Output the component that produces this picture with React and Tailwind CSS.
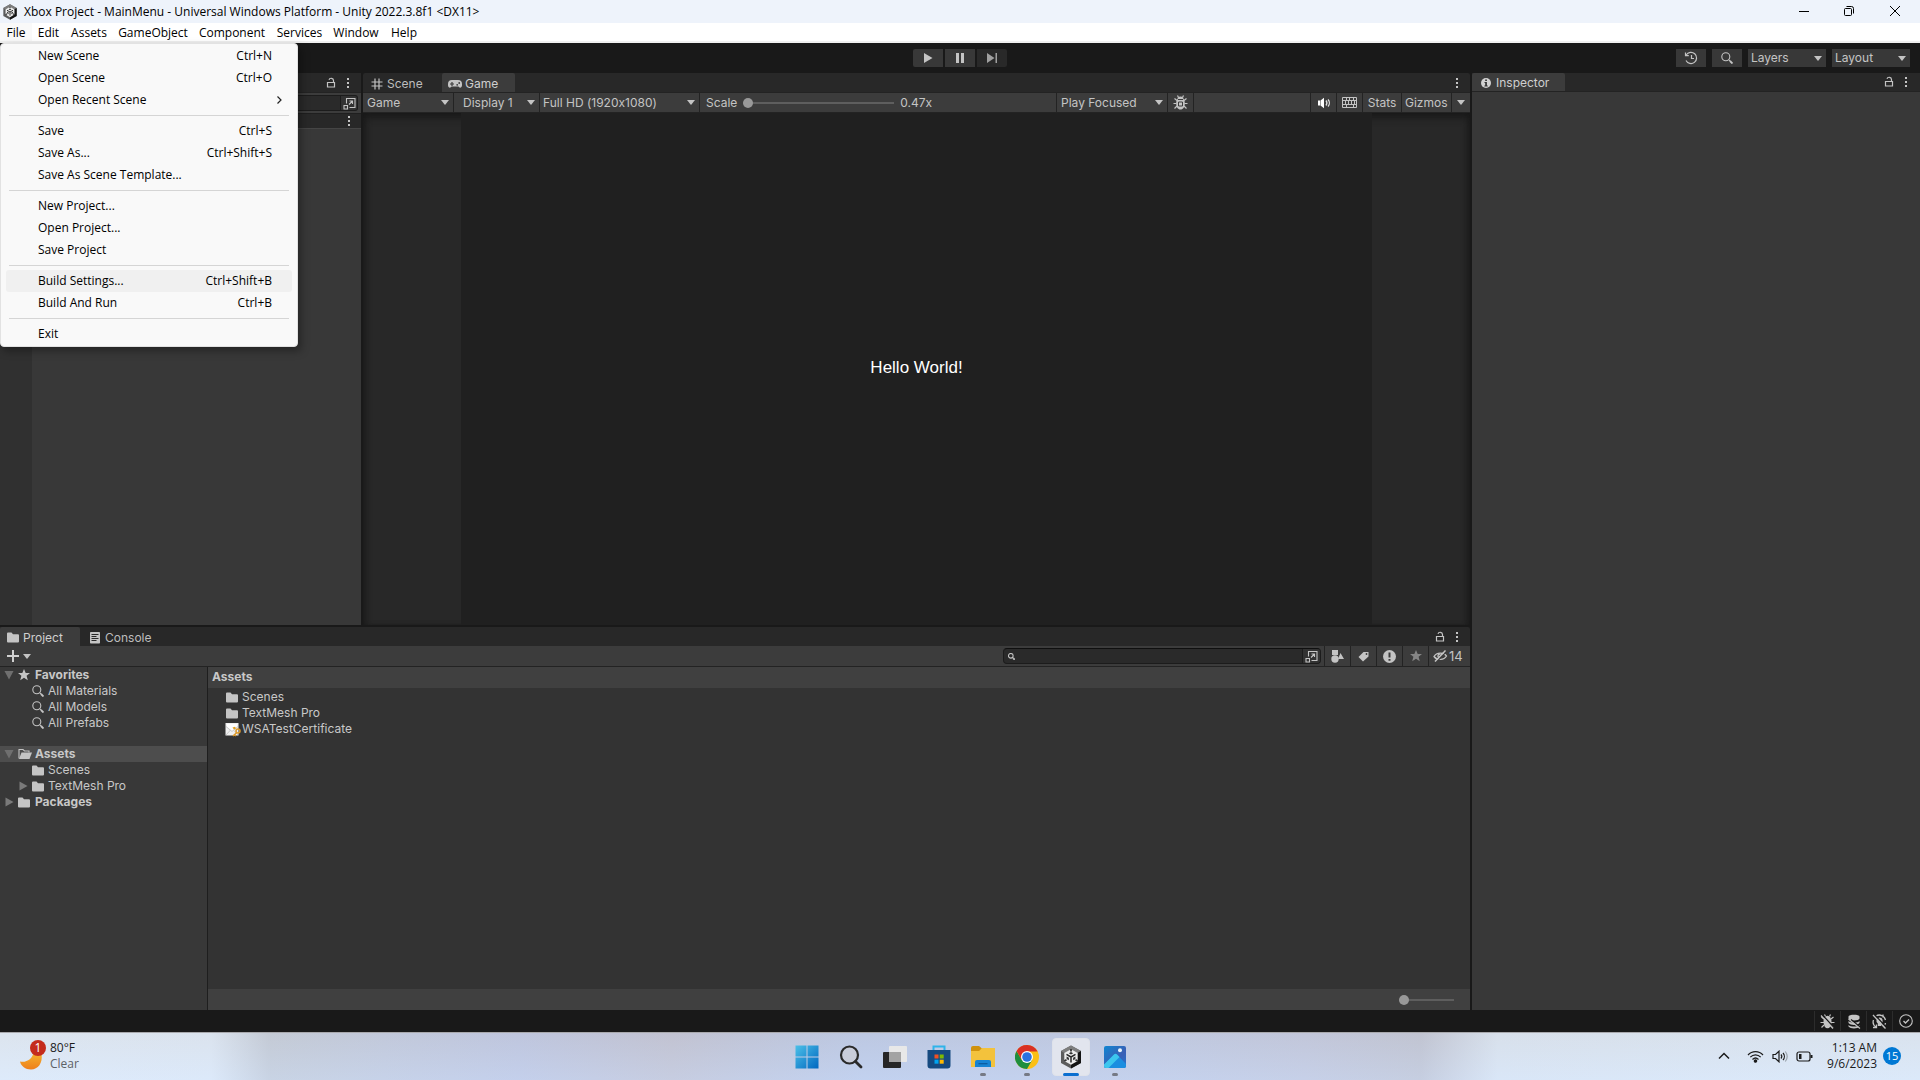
import React from "react";

const UI = "font-['Inter','Liberation_Sans',sans-serif] [font-variant-ligatures:no-contextual]";
const WIN = "font-['Open_Sans','Noto_Sans',sans-serif]";

/* ---------- icons ---------- */

function UnityLogo({ size, className }) {
  return (
    <svg width={size} height={size} viewBox="0 0 24 24" className={className}>
      <path d="M12 .5 22 6v12l-10 5.500L2 18V6z" fill="#5c5c5c" />
      <path d="M12 .5 22 6l-10 6L2 6z" fill="#7e7e7e" />
      <path d="M12 12 22 6v12l-10 5.500z" fill="#141414" />
      <path d="M12 4.300 18.700 8.100v7.800L12 19.700l-6.700-3.800V8.100z" fill="#ededed" />
      <path d="M12 12v5.500M12 12 7.500 9.400M12 12l4.500-2.600" stroke="#2a2a2a" strokeWidth="1.500" />
      <path d="M12 4v2.500M5.300 16l2.200-1.300M18.700 16l-2.200-1.300" stroke="#333" strokeWidth="1.800" />
      <path d="M9.800 8.300 12 7.100l2.200 1.200L12 9.500zM7.600 11.500l2.300 1.300v2.400l-2.300-1.300zM16.400 11.500l-2.300 1.300v2.400l2.300-1.300z" fill="#333" />
    </svg>
  );
}

function Caret({ className = "" }) {
  return (
    <svg width="8" height="5" viewBox="0 0 8 5" className={className}>
      <path d="M0 0h8L4 5z" fill="#c4c4c4" />
    </svg>
  );
}

function Dots() {
  return (
    <svg width="4" height="12" viewBox="0 0 4 12">
      <path d="M1 1h2v2H1zM1 5h2v2H1zM1 9h2v2H1z" fill="#c4c4c4" />
    </svg>
  );
}

function Lock() {
  return (
    <svg width="10" height="12" viewBox="0 0 10 12" fill="none" stroke="#c4c4c4">
      <path d="M1.500 5.500h7v4.500h-7z" strokeWidth="1.200" />
      <path d="M7.500 5.500V3.500a2.300 2.300 0 0 0-4.500-.6" strokeWidth="1.200" />
    </svg>
  );
}

function PopOut() {
  return (
    <svg width="13" height="13" viewBox="0 0 13 13" fill="none" stroke="#c4c4c4" strokeWidth="1.100">
      <path d="M3.500 6.500V1.500h8.500v9H6.500" />
      <path d="M1 8.500h3.500V12H1z" />
      <path d="M6 7.500 9.500 4M6.500 4h3v3" />
    </svg>
  );
}

function Grid() {
  return (
    <svg width="12" height="12" viewBox="0 0 12 12" stroke="#c4c4c4" strokeWidth="1.200">
      <path d="M4 0.500v11M8 0.500v11M0.500 4h11M0.500 8h11" />
    </svg>
  );
}

function Gamepad() {
  return (
    <svg width="14" height="10" viewBox="0 0 14 10">
      <path d="M4 1h6a4 4 0 0 1 4 4v1.200c0 2.600-2.500 3.300-3.600 1.300H3.600C2.500 9.500 0 8.800 0 6.200V5a4 4 0 0 1 4-4z" fill="#c4c4c4" />
      <path d="M4 3v4M2 5h4" stroke="#3c3c3c" strokeWidth="1.200" />
      <circle cx="9.200" cy="5.800" r="0.900" fill="#3c3c3c" />
      <circle cx="11.200" cy="4" r="0.900" fill="#3c3c3c" />
    </svg>
  );
}

function Folder() {
  return (
    <svg width="12" height="11" viewBox="0 0 12 11" className="shrink-0">
      <path d="M0 1.500A1 1 0 0 1 1 .5h3.500l1.500 1.700h5a1 1 0 0 1 1 1V9.500a1 1 0 0 1-1 1H1a1 1 0 0 1-1-1z" fill="#c4c4c4" />
    </svg>
  );
}

function FolderOpen() {
  return (
    <svg width="14" height="12" viewBox="0 0 14 12" className="shrink-0">
      <path d="M1 10.500V1.500h4L6.500 3H11v1.500" fill="none" stroke="#c4c4c4" strokeWidth="1.100" />
      <path d="M3.500 4.500H14L11.500 11H1z" fill="#c4c4c4" />
    </svg>
  );
}

function ConsoleIcon() {
  return (
    <svg width="10" height="12" viewBox="0 0 10 12">
      <rect width="10" height="11.500" rx="0.800" fill="#c4c4c4" />
      <path d="M1.500 2.500h7M1.500 4.500h5M1.500 6.500h7M1.500 8.500h5" stroke="#282828" />
    </svg>
  );
}

function Search({ size = 12, sw = 1.1 }) {
  return (
    <svg width={size} height={size} viewBox="0 0 12 12" fill="none" stroke="#c4c4c4" strokeWidth={sw} className="shrink-0">
      <circle cx="4.800" cy="4.800" r="4" />
      <path d="M8 8l1.200 1.200" />
      <path d="M9 9l2.500 2.500" strokeWidth={sw * 1.7} />
    </svg>
  );
}

function Star({ fill = "#c4c4c4" }) {
  return (
    <svg width="12" height="12" viewBox="0 0 12 12" className="shrink-0">
      <path d="M6 0l1.700 4H12L8.600 6.800 9.800 11.300 6 8.700 2.200 11.300l1.200-4.500L0 4h4.300z" fill={fill} />
    </svg>
  );
}

function Info() {
  return (
    <svg width="10" height="10" viewBox="0 0 10 10">
      <circle cx="5" cy="5" r="5" fill="#d2d2d2" />
      <path d="M4.200 1.500h1.700v1.500H4.200zM3.500 4h2.400v3.500h.8v1H3.400v-1h.8V5h-.7z" fill="#333" />
    </svg>
  );
}

function Bug() {
  return (
    <svg width="15" height="15" viewBox="0 0 15 15" fill="none" stroke="#c4c4c4">
      <path d="M4 5.500 1.500 3.500M11 5.500l2.500-2M3.500 8.500H.5M11.500 8.500h3M4 11l-2.500 2.500M11 11l2.500 2.500M5.500 2.500 4.500.5M9.500 2.500l1-2" strokeWidth="1.200" />
      <path d="M7.500 1.500c2.200 0 3 1.200 3 2.500 1 .8 1.300 2.500 1.300 4.500 0 3.500-1.600 6-4.300 6s-4.300-2.500-4.300-6c0-2 .3-3.700 1.300-4.500 0-1.300.8-2.500 3-2.500z" fill="#c4c4c4" stroke="none" />
      <path d="M5 4.500h5M5.500 7h4v4h-4z" stroke="#3c3c3c" />
    </svg>
  );
}

function Speaker() {
  return (
    <svg width="14" height="12" viewBox="0 0 14 12">
      <path d="M1 3.500h2v5H1zM3.500 3.500 7 .8v10.400L3.500 8.500z" fill="#fff" />
      <path d="M9 3.500c1 1.300 1 3.700 0 5M11 2.500c1.800 2 1.800 5 0 7" fill="none" stroke="#e0e0e0" strokeWidth="1.300" />
    </svg>
  );
}

function Keyboard() {
  return (
    <svg width="15" height="11" viewBox="0 0 15 11" fill="none" stroke="#c4c4c4">
      <path d="M.5.5h14v10H.5zM.5 3.500h14M.5 7.500h14M4.500.5v3M7.500.5v3M11.500.5v3M3.500 3.500v4M6.500 3.500v4M9.500 3.500v4M12.500 3.500v4M4.500 7.500v3M11.500 7.500v3" />
    </svg>
  );
}

function Triangle({ open }) {
  return (
    <svg width="10" height="10" viewBox="0 0 10 10" className="shrink-0">
      <path d={open ? "M0.500 1h9L5 9.500z" : "M1.500 0.500v9L9.500 5z"} fill={open ? "#6f6f6f" : "#7a7a7a"} />
    </svg>
  );
}

function Certificate() {
  return (
    <svg width="16" height="15" viewBox="0 0 16 15" className="-ml-px shrink-0">
      <rect x="0.500" y="1" width="13" height="12.500" fill="#f0f0f0" />
      <path d="M1 4.500 7 9.500l6-5M1 13l4.500-5M13 13 9 8.500" fill="none" stroke="#c9c9c9" />
      <path d="M2 2h10v2.500L7 8.500 2 4.500z" fill="#fff" />
      <path d="M7.500 5.500l2.500-.7 1 1.500L9 7.600z" fill="#e2a01c" />
      <circle cx="13" cy="9" r="2" fill="none" stroke="#dd9a2b" strokeWidth="1.500" />
      <path d="M11.800 10.500 8 14M9.500 12.500l1.500 1.500" stroke="#dd9a2b" strokeWidth="1.500" />
    </svg>
  );
}

/* ---------- shared controls ---------- */

function Dropdown({ label, name, className = "", padding = "pl-1" }) {
  return (
    <label className={`relative flex items-center ${className}`}>
      <select
        aria-label={name}
        className={`h-full w-full appearance-none bg-transparent pr-4 text-[12px] leading-4 text-[#c4c4c4] outline-none ${padding}`}
      >
        <option>{label}</option>
      </select>
      <Caret className="pointer-events-none absolute right-1" />
    </label>
  );
}

const SLIDER =
  "h-3 appearance-none bg-transparent [&::-webkit-slider-runnable-track]:h-[2px] [&::-webkit-slider-runnable-track]:bg-[#5e5e5e] [&::-webkit-slider-thumb]:-mt-1 [&::-webkit-slider-thumb]:size-[10px] [&::-webkit-slider-thumb]:appearance-none [&::-webkit-slider-thumb]:rounded-full [&::-webkit-slider-thumb]:bg-[#999999]";

function IconButton({ label, className = "", children }) {
  return (
    <button type="button" aria-label={label} className={`flex items-center justify-center ${className}`}>
      {children}
    </button>
  );
}

function TabStrip({ children, lock, className = "", end = "pr-[9px]" }) {
  return (
    <div className={`flex h-[19px] shrink-0 items-stretch bg-[#282828] ${className}`}>
      {children}
      <div className={`ml-auto flex items-center gap-[5px] ${end}`}>
        {lock && (
          <IconButton label="Lock" className="w-4">
            <Lock />
          </IconButton>
        )}
        <IconButton label="Panel menu" className="w-2">
          <Dots />
        </IconButton>
      </div>
    </div>
  );
}

function Tab({ active, icon, label, className = "" }) {
  return (
    <button
      type="button"
      className={`flex items-center pt-[2px] text-[12px] leading-4 ${
        active ? "rounded-t-[2px] bg-[#3c3c3c] text-[#cfcfcf]" : "text-[#bdbdbd]"
      } ${className}`}
    >
      {icon}
      <span>{label}</span>
    </button>
  );
}

/* ---------- window chrome ---------- */

function TitleBar() {
  return (
    <header className={`flex h-[23px] shrink-0 items-center bg-[#eef3fb] text-[12px] leading-4 text-black ${WIN}`}>
      <UnityLogo size={16} className="ml-[2px]" />
      <span className="ml-[6px]">Xbox Project - MainMenu - Universal Windows Platform - Unity 2022.3.8f1 &lt;DX11&gt;</span>
      <div className="ml-auto flex h-full items-center pr-[2px] pb-[2px]">
        <IconButton label="Minimize" className="h-full w-[45px]">
          <svg width="10" height="10" viewBox="0 0 10 10"><path d="M0 5.500h10" stroke="#000" /></svg>
        </IconButton>
        <IconButton label="Restore" className="h-full w-[45px]">
          <svg width="10" height="10" viewBox="0 0 10 10" fill="none" stroke="#000">
            <rect x="0.500" y="2.500" width="7" height="7" rx="1" />
            <path d="M2.500.5h5a2 2 0 0 1 2 2v5" />
          </svg>
        </IconButton>
        <IconButton label="Close" className="h-full w-[47px]">
          <svg width="10" height="10" viewBox="0 0 10 10"><path d="M0 0l10 10M10 0L0 10" stroke="#000" /></svg>
        </IconButton>
      </div>
    </header>
  );
}

const MENUS = [
  ["File", "w-8 bg-[#f9f9f9]"],
  ["Edit", "w-[33px]"],
  ["Assets", "w-12"],
  ["GameObject", "w-20"],
  ["Component", "w-[78px]"],
  ["Services", "w-[57px]"],
  ["Window", "w-14"],
  ["Help", "w-10"],
];

const FILE_MENU = [
  [["New Scene", "Ctrl+N"], ["Open Scene", "Ctrl+O"], ["Open Recent Scene", ">"]],
  [["Save", "Ctrl+S"], ["Save As...", "Ctrl+Shift+S"], ["Save As Scene Template...", ""]],
  [["New Project...", ""], ["Open Project...", ""], ["Save Project", ""]],
  [["Build Settings...", "Ctrl+Shift+B"], ["Build And Run", "Ctrl+B"]],
  [["Exit", ""]],
];

function FileMenu() {
  return (
    <div className="absolute top-5 left-0 z-10 w-[298px] rounded-[4px] border border-[#e2e2e2] bg-[#f9f9f9] py-px shadow-[3px_4px_8px_rgba(0,0,0,0.35)]">
      {FILE_MENU.map((group, i) => (
        <div key={i} className={i ? "before:mx-2 before:my-1 before:block before:h-px before:bg-[#d5d5d5] before:content-['']" : ""}>
          {group.map(([label, key]) => (
            <button
              key={label}
              type="button"
              className={`mx-[5px] flex h-[22px] w-[286px] items-center justify-between rounded-[3px] pr-5 pl-8 ${
                label === "Build Settings..." ? "bg-[#f0f0f0]" : ""
              }`}
            >
              <span>{label}</span>
              {key === ">" ? (
                <svg width="5" height="8" viewBox="0 0 5 8" fill="none" stroke="#222" strokeWidth="1.200" className="-mr-[10px]">
                  <path d="M.5.5 4 4 .5 7.500" />
                </svg>
              ) : (
                <span>{key}</span>
              )}
            </button>
          ))}
        </div>
      ))}
    </div>
  );
}

function MenuBar() {
  return (
    <nav className={`relative flex h-5 shrink-0 border-b-2 border-[#f0f0f0] bg-white text-[12px] leading-4 text-black ${WIN}`}>
      {MENUS.map(([label, cls]) => (
        <button key={label} type="button" className={`flex items-end justify-center ${cls}`}>
          {label}
        </button>
      ))}
      <FileMenu />
    </nav>
  );
}

function Toolbar() {
  return (
    <div className="relative flex h-[30px] shrink-0 items-center justify-center bg-[#191919]">
      <div className="flex h-[18px] gap-[2px]">
        <IconButton label="Play" className="w-[30px] rounded-l-[2px] bg-[#383838]">
          <svg width="9" height="10" viewBox="0 0 9 10"><path d="M0 0l8.500 5L0 10z" fill="#c4c4c4" /></svg>
        </IconButton>
        <IconButton label="Pause" className="w-[30px] bg-[#383838]">
          <svg width="8" height="10" viewBox="0 0 8 10"><path d="M0 0h3v10H0zM5 0h3v10H5z" fill="#c4c4c4" /></svg>
        </IconButton>
        <IconButton label="Step" className="w-[30px] rounded-r-[2px] bg-[#292929]">
          <svg width="10" height="10" viewBox="0 0 10 10"><path d="M0 0l7.500 5L0 10zM8.500 0H10v10H8.500z" fill="#a0a0a0" /></svg>
        </IconButton>
      </div>
      <div className="absolute right-[10px] flex h-[18px] gap-[6px]">
        <IconButton label="Undo history" className="w-[30px] bg-[#383838]">
          <svg width="14" height="14" viewBox="0 0 14 14" fill="none" stroke="#c4c4c4" strokeWidth="1.200">
            <path d="M2.200 4A5.600 5.600 0 1 1 2 9.500" />
            <path d="M1.500 1.500v3.200h3.300M7.500 4v3.500H10" />
          </svg>
        </IconButton>
        <IconButton label="Search" className="w-[30px] bg-[#383838]"><Search /></IconButton>
        <Dropdown name="Layers" label="Layers" className="w-[78px] bg-[#383838]" padding="pl-[3px]" />
        <Dropdown name="Layout" label="Layout" className="w-[78px] bg-[#383838]" padding="pl-[3px]" />
      </div>
    </div>
  );
}

/* ---------- panels ---------- */

function Hierarchy() {
  return (
    <section className="flex w-[361px] shrink-0 flex-col bg-[#383838]">
      <TabStrip lock />
      <div className="flex h-[21px] shrink-0 items-center justify-end border-t border-[#232323] bg-[#3c3c3c] pr-[3px] pl-9">
        <input
          aria-label="Search hierarchy"
          className="h-4 flex-1 border border-[#1c1c1c] bg-[#2a2a2a] outline-none"
        />
        <IconButton label="Open in search window" className="h-4 w-[17px] rounded-r-[3px] border border-l-0 border-[#1c1c1c] bg-[#323232]">
          <PopOut />
        </IconButton>
      </div>
      <div className="flex h-4 shrink-0 items-center justify-end border-y border-[#1f1f1f] border-b-[#454545] bg-[#282828] pr-[8px]">
        <IconButton label="Scene options" className="w-2"><Dots /></IconButton>
      </div>
      <div className="w-8 flex-1 bg-[#303030]" />
    </section>
  );
}

function GamePanel() {
  return (
    <section className="flex min-w-0 flex-1 flex-col">
      <TabStrip className="rounded-t-[2px]">
        <Tab icon={<Grid />} label="Scene" className="w-[79px] gap-1 pl-2" />
        <Tab active icon={<Gamepad />} label="Game" className="w-[73px] gap-[3px] pl-[6px]" />
      </TabStrip>
      <div className="flex h-[21px] shrink-0 divide-x divide-[#232323] border-y border-[#232323] bg-[#3c3c3c] text-[12px] leading-4 text-[#c4c4c4]">
        <Dropdown name="View" label="Game" className="w-[91px]" />
        <Dropdown name="Display" label="Display 1" className="w-[86px]" padding="pl-[9px]" />
        <Dropdown name="Resolution" label="Full HD (1920x1080)" className="w-40" padding="pl-[3px]" />
        <label className="flex flex-1 items-center gap-[6px] pl-[6px]">
          <span>Scale</span>
          <input type="range" min="0" max="100" defaultValue="0" className={`w-[151px] ${SLIDER}`} />
          <span>0.47x</span>
        </label>
        <Dropdown name="Play mode" label="Play Focused" className="w-[111px]" padding="pl-1" />
        <IconButton label="Debugger" className="w-[26px]"><Bug /></IconButton>
        <div className="w-[117px]" />
        <IconButton label="Mute audio" className="w-[26px]"><Speaker /></IconButton>
        <IconButton label="Shortcuts" className="w-[26px]"><Keyboard /></IconButton>
        <button type="button" className="w-[39px]">Stats</button>
        <button type="button" className="w-[50px] pl-[3px] text-left">Gizmos</button>
        <IconButton label="Gizmos options" className="w-[18px]"><Caret /></IconButton>
      </div>
      <div className="flex min-h-0 flex-1 justify-center bg-[#282828] shadow-[inset_0_6px_8px_-2px_#181818,inset_5px_0_6px_-3px_#1b1b1b,inset_-5px_0_6px_-3px_#1b1b1b]">
        <div className="flex aspect-video h-full items-center justify-center bg-[#202020] pb-[2px] font-['Liberation_Sans',sans-serif] text-[17px] leading-5 text-white">
          Hello World!
        </div>
      </div>
    </section>
  );
}

const TREE = [
  { label: "Favorites", bold: true, open: true, icon: <Star /> },
  { label: "All Materials", icon: <Search />, child: true },
  { label: "All Models", icon: <Search />, child: true },
  { label: "All Prefabs", icon: <Search />, child: true },
  { label: "Assets", bold: true, open: true, icon: <FolderOpen />, selected: true },
  { label: "Scenes", icon: <Folder />, child: true },
  { label: "TextMesh Pro", icon: <Folder />, child: true, closed: true },
  { label: "Packages", bold: true, closed: true, icon: <Folder /> },
];

function ProjectTree() {
  return (
    <ul className="w-[208px] shrink-0 border-r border-[#1e1e1e] bg-[#383838] text-[12px] leading-4 text-[#c8c8c8]">
      {TREE.map((n) => (
        <li
          key={n.label}
          className={`flex h-4 items-center ${n.child ? "pl-[18px]" : "pl-1"} ${n.selected ? "mt-[15px] bg-[#4d4d4d]" : ""}`}
        >
          <span className="flex w-[14px] shrink-0">{(n.open || n.closed) && <Triangle open={n.open} />}</span>
          <span className={`flex shrink-0 ${n.child ? "w-4" : "w-[17px]"}`}>{n.icon}</span>
          <span className={n.bold ? "font-bold" : ""}>{n.label}</span>
        </li>
      ))}
    </ul>
  );
}

const FILES = [
  ["Scenes", <Folder key="a" />],
  ["TextMesh Pro", <Folder key="b" />],
  ["WSATestCertificate", <Certificate key="c" />],
];

function ProjectPanel() {
  return (
    <section className="flex h-[383px] shrink-0 flex-col">
      <TabStrip lock className="rounded-tr-[2px]">
        <Tab active icon={<Folder />} label="Project" className="w-20 gap-1 pl-[7px]" />
        <Tab icon={<ConsoleIcon />} label="Console" className="gap-[5px] pl-[10px]" />
      </TabStrip>
      <div className="flex h-[21px] shrink-0 items-stretch border-b border-[#232323] bg-[#3c3c3c] text-[12px] leading-4 text-[#c4c4c4]">
        <IconButton label="Create" className="ml-[7px] gap-1">
          <svg width="12" height="12" viewBox="0 0 12 12"><path d="M6 0v12M0 6h12" stroke="#d0d0d0" strokeWidth="2" /></svg>
          <Caret />
        </IconButton>
        <label className="my-[2px] mr-[3px] ml-auto flex w-[318px] items-center rounded-[4px] border border-[#1c1c1c] border-t-[#0f0f0f] bg-[#2a2a2a] pl-1">
          <Search size={7} sw={1.8} />
          <input aria-label="Search project" className="min-w-0 flex-1 bg-transparent px-1 outline-none" />
          <span className="flex h-full w-[18px] items-center justify-center rounded-r-[3px] border-l border-[#1c1c1c] bg-[#323232]">
            <PopOut />
          </span>
        </label>
        <IconButton label="Filter by type" className="w-[26px] border-l border-[#232323]">
          <svg width="13" height="13" viewBox="0 0 13 13" fill="#c4c4c4">
            <path d="M1 0h6v5H1zM9.500 3 13 9H7z" />
            <circle cx="4" cy="9" r="3.700" />
          </svg>
        </IconButton>
        <IconButton label="Filter by label" className="w-[26px] border-l border-[#232323]">
          <svg width="11" height="11" viewBox="0 0 11 11">
            <path d="M5.500 1H10l.5.500V5.500L5 10.500.5 6z" fill="#c4c4c4" />
            <circle cx="8.500" cy="3" r="0.900" fill="#3c3c3c" />
          </svg>
        </IconButton>
        <IconButton label="Import errors" className="w-[26px] border-l border-[#232323]">
          <svg width="13" height="13" viewBox="0 0 13 13">
            <circle cx="6.500" cy="6.500" r="6.500" fill="#c4c4c4" />
            <path d="M5.500 2.500h2V7.500h-2zM5.500 9h2v1.700h-2z" fill="#3c3c3c" />
          </svg>
        </IconButton>
        <IconButton label="Save search" className="w-[26px] border-l border-[#232323]"><Star fill="#868686" /></IconButton>
        <button type="button" className="flex w-[42px] items-center gap-px border-l border-[#232323] pl-1 text-[13px]">
          <svg width="15" height="12" viewBox="0 0 15 12" fill="none" stroke="#c4c4c4" strokeWidth="1.300" className="shrink-0">
            <path d="M1 6.500C3.500 2 11 2 13.500 6 11 10.500 4 10.500 1 6.500z" />
            <path d="M5.800 7.500a1.700 1.700 0 0 1 1.700-3" />
            <path d="M13.500 1.500 3.500 12" stroke="#3c3c3c" strokeWidth="1.200" />
            <path d="M12.500.5 2 11.500" strokeWidth="1.500" />
          </svg>
          <span>14</span>
        </button>
      </div>
      <div className="flex min-h-0 flex-1">
        <ProjectTree />
        <div className="flex min-w-0 flex-1 flex-col bg-[#333333]">
          <h2 className="flex h-[21px] shrink-0 items-center bg-[#404040] pb-px pl-1 text-[12px] leading-4 font-bold text-[#c8c8c8]">Assets</h2>
          <ul className="flex-1 pt-[1px] pl-[18px] text-[12px] leading-4 text-[#c8c8c8]">
            {FILES.map(([label, icon]) => (
              <li key={label} className="flex h-4 items-center">
                <span className="flex w-4 shrink-0">{icon}</span>
                <span>{label}</span>
              </li>
            ))}
          </ul>
          <div className="flex h-[21px] shrink-0 items-center justify-end bg-[#404040] pr-4">
            <input aria-label="Icon size" type="range" min="0" max="100" defaultValue="0" className={`w-[55px] ${SLIDER}`} />
          </div>
        </div>
      </div>
    </section>
  );
}

function Inspector() {
  return (
    <section className="flex w-[448px] shrink-0 flex-col bg-[#383838]">
      <TabStrip lock className="border-b border-[#232323]" end="pr-[10px]">
        <Tab active icon={<Info />} label="Inspector" className="w-[93px] gap-[5px] pl-[9px]" />
      </TabStrip>
    </section>
  );
}

function StatusBar() {
  const cell = "h-5 w-[26px] border-l border-[#2c2c2c]";
  return (
    <div className="flex h-[22px] shrink-0 items-center justify-end bg-[#191919] pr-[2px]">
      <IconButton label="Debugger disabled" className={cell}>
        <svg width="15" height="15" viewBox="0 0 15 15" fill="none" stroke="#c4c4c4">
          <path d="M4 5 1.500 3M11 5l2.500-2M4 8.500H.5M11 8.500h3.500M4 11l-2.500 2.500M11 11l2.500 2.500M5.500 2.500 4.500.5M9.500 2.500l1-2" strokeWidth="1.200" />
          <ellipse cx="7.500" cy="8" rx="4" ry="6.300" fill="#c4c4c4" stroke="none" />
          <path d="M2 .5 14 13.500" stroke="#191919" strokeWidth="1.300" />
          <path d="M1 1.500 13 14.500" strokeWidth="1.200" />
        </svg>
      </IconButton>
      <IconButton label="Cache server" className={cell}>
        <svg width="14" height="15" viewBox="0 0 14 15">
          <path d="M1.500 2.500C1.500 0 12.500 0 12.500 2.500v2C12.500 7 1.500 7 1.500 4.500zM1.500 7c2 2 9 2 11 0v2c-2 2.500-9 2.500-11 0zM1.500 11c2 2 9 2 11 0v1.500c-2 2.500-9 2.500-11 0z" fill="#c4c4c4" />
          <path d="M4 5.500 13.500 13.500" stroke="#191919" strokeWidth="1.300" />
          <path d="M1.500 5 13 14.500" stroke="#c4c4c4" strokeWidth="1.200" />
        </svg>
      </IconButton>
      <IconButton label="Auto lighting" className={cell}>
        <svg width="15" height="15" viewBox="0 0 15 15" fill="none" stroke="#c4c4c4" strokeWidth="1.300">
          <path d="M4 2A6.300 6.300 0 0 1 13.500 6M13.500 9a6.300 6.300 0 0 1-2.500 4M11 .5v3M1.500 6a6 6 0 0 0 2.500 7M1 13.500h3.500v-3" />
          <path d="M7.500 3.500a3.300 3.300 0 0 1 1.800 6v2.500H5.800V9.500a3.300 3.300 0 0 1 1.700-6z" fill="#c4c4c4" stroke="none" />
          <path d="M2.500.5 14.500 13.500" stroke="#191919" />
          <path d="M1 1l12.500 13.500" />
        </svg>
      </IconButton>
      <IconButton label="Background tasks" className={cell}>
        <svg width="14" height="14" viewBox="0 0 14 14" fill="none" stroke="#c4c4c4" strokeWidth="1.100">
          <circle cx="7" cy="7" r="6.300" />
          <path d="M4.500 7l2 2L10 5.500" strokeWidth="1.400" />
        </svg>
      </IconButton>
    </div>
  );
}

/* ---------- taskbar ---------- */

const APPS = [
  {
    name: "Start",
    icon: (
      <svg width="24" height="24" viewBox="0 0 24 24">
        <defs>
          <linearGradient id="win" x1="0" y1="0" x2="1" y2="1">
            <stop offset="0" stopColor="#4cc0e8" />
            <stop offset="1" stopColor="#0067c0" />
          </linearGradient>
        </defs>
        <path d="M.5.5h11v11H.5zM12.500.5h11v11h-11zM.5 12.500h11v11H.5zM12.500 12.500h11v11h-11z" fill="url(#win)" />
      </svg>
    ),
  },
  {
    name: "Search",
    icon: (
      <svg width="24" height="24" viewBox="0 0 24 24" fill="none" stroke="#2a2a2a">
        <circle cx="10.500" cy="10" r="8.500" strokeWidth="2.200" fill="#c9cdda" />
        <path d="M16.500 16.500 22 22" strokeWidth="2.800" strokeLinecap="round" />
      </svg>
    ),
  },
  {
    name: "Task view",
    icon: (
      <svg width="26" height="24" viewBox="0 0 26 24">
        <rect x="1" y="7" width="18" height="16" rx="1" fill="#262626" />
        <rect x="7" y="1" width="18" height="16" rx="1" fill="#e8e8e8" />
        <rect x="7" y="7" width="12" height="10" fill="#a3a3a3" />
      </svg>
    ),
  },
  {
    name: "Microsoft Store",
    icon: (
      <svg width="24" height="24" viewBox="0 0 24 24">
        <path d="M6.500 6V1.500h11V6" fill="none" stroke="#2fb4ea" strokeWidth="2" />
        <path d="M.5 5h23v15.500a3 3 0 0 1-3 3h-17a3 3 0 0 1-3-3z" fill="#164a80" />
        <path d="M7.500 9.500h4v4h-4z" fill="#f25022" />
        <path d="M12.700 9.500h4v4h-4z" fill="#7fba00" />
        <path d="M7.500 14.700h4v4h-4z" fill="#00a4ef" />
        <path d="M12.700 14.700h4v4h-4z" fill="#ffb900" />
      </svg>
    ),
  },
  {
    name: "File Explorer",
    running: true,
    icon: (
      <svg width="24" height="24" viewBox="0 0 24 24">
        <path d="M0 3a2 2 0 0 1 2-2h6l3 2.500V8H0z" fill="#d0920d" />
        <path d="M0 6h8l3-3h13v19H0z" fill="#f3c23c" />
        <path d="M4 22v-5a2 2 0 0 1 2-2h12a2 2 0 0 1 2 2v5z" fill="#1683d3" />
        <path d="M7.500 18.700h9" stroke="#0b5a9c" strokeWidth="1.200" />
      </svg>
    ),
  },
  {
    name: "Chrome",
    running: true,
    icon: (
      <svg width="24" height="24" viewBox="0 0 24 24">
        <circle cx="12" cy="12" r="12" fill="#fbbf16" />
        <path d="M1.600 6A12 12 0 0 0 12 24l5.200-9L12 12l-5.200 3z" fill="#1e8e3e" />
        <path d="M12 6.500h10.600A12 12 0 0 0 1.600 6l5.200 9z" fill="#d93025" />
        <circle cx="12" cy="12" r="6" fill="#fff" />
        <circle cx="12" cy="12" r="4.800" fill="#2b72e0" />
      </svg>
    ),
  },
  { name: "Unity", active: true, icon: <UnityLogo size={24} /> },
  {
    name: "Photos",
    running: true,
    icon: (
      <svg width="24" height="24" viewBox="0 0 24 24">
        <defs>
          <linearGradient id="pho" x1="0" y1="0" x2="1" y2="1">
            <stop offset="0" stopColor="#0f86d2" />
            <stop offset="0.600" stopColor="#3a5fb5" />
            <stop offset="1" stopColor="#2276cf" />
          </linearGradient>
        </defs>
        <rect x="1" y="1" width="22" height="22" rx="2" fill="url(#pho)" />
        <path d="M1 20 11 9.500a2 2 0 0 1 3 0L23 19v2a2 2 0 0 1-2 2H3a2 2 0 0 1-2-2z" fill="#1b8ee0" />
        <path d="M1 19.500 11 9.500a2 2 0 0 1 3 0L16.500 12 5.500 23H3a2 2 0 0 1-2-2z" fill="#3cc6ee" />
        <circle cx="17" cy="5.200" r="2" fill="#eaf4fc" />
      </svg>
    ),
  },
];

function Taskbar() {
  return (
    <footer
      className={`relative flex h-12 shrink-0 items-center justify-between border-t border-[#a9a9ad] bg-[linear-gradient(to_bottom,rgba(190,190,200,0.25),rgba(205,222,250,0.35)),linear-gradient(to_right,#e6f1fb_0%,#e4effa_11%,#c6ced9_14%,#c3cce0_20%,#bfc8e4_27%,#c3c4d4_35%,#bccbea_45%,#c0cbe6_60%,#c3c9df_68%,#c2c6d4_74%,#e0ebf6_78%,#e3effa_100%)] pb-px text-[12px] leading-4 text-[#1b1b1b] ${WIN}`}
    >
      <button type="button" className="flex items-center text-left">
        <span className="relative ml-5 flex w-[30px]">
          <svg width="24" height="30" viewBox="0 0 24 30">
            <defs>
              <linearGradient id="moon" x1="0" y1="0" x2="0" y2="1">
                <stop offset="0" stopColor="#f5b52e" />
                <stop offset="1" stopColor="#ee7f1b" />
              </linearGradient>
            </defs>
            <path d="M0 20.500C6 22 13 18 13.500 11l8 2C23 22 18 28.500 11 28.500 5.500 28.500 1 25 0 20.500z" fill="url(#moon)" />
          </svg>
          <span className="absolute -top-px left-[10px] flex size-4 items-center justify-center rounded-full bg-[#c42b1c] text-white">1</span>
        </span>
        <span>
          <span className="block">80°F</span>
          <span className="block text-[#5c6166]">Clear</span>
        </span>
      </button>

      <div className="absolute inset-0 mx-auto flex w-fit items-center pl-[2px]">
        {APPS.map((a) => (
          <button key={a.name} type="button" aria-label={a.name} className="flex w-11 justify-center">
            <span
              className={`relative flex h-[38px] w-[38px] items-center justify-center rounded-[4px] ${
                a.active ? "border border-[#dfe2ea] bg-[#e2e5ee]" : ""
              }`}
            >
              {a.icon}
              {a.running && <span className="absolute bottom-0 h-[3px] w-[6px] rounded-full bg-[#767a85]" />}
              {a.active && <span className="absolute -bottom-px h-[3px] w-4 rounded-full bg-[#0b6fd0]" />}
            </span>
          </button>
        ))}
      </div>

      <div className="flex items-center pr-[19px]">
        <IconButton label="Show hidden icons" className="mr-[17px]">
          <svg width="12" height="8" viewBox="0 0 12 8" fill="none" stroke="#1b1b1b" strokeWidth="1.500"><path d="M1 6.500 6 1.500l5 5" /></svg>
        </IconButton>
        <IconButton label="Network, volume and battery" className="mr-[14px] gap-2">
          <svg width="17" height="13" viewBox="0 0 17 13" fill="none" stroke="#1b1b1b" strokeWidth="1.200">
            <path d="M1 5c4-4.500 11-4.500 15 0M3.300 7.200c3-3.200 7.400-3.200 10.400 0M5.500 9.500c1.800-1.800 4.200-1.800 6 0" />
            <circle cx="8.500" cy="11" r="1.200" fill="#1b1b1b" />
          </svg>
          <svg width="16" height="13" viewBox="0 0 16 13" fill="none" stroke="#1b1b1b" strokeWidth="1.200">
            <path d="M1 4.500h2.500L7 1.200v10.600L3.500 8.500H1z" />
            <path d="M9 4.500c1 1.200 1 2.800 0 4M11 3c1.800 2 1.800 5 0 7" />
            <path d="M13.300 1.500c2.300 3 2.300 7 0 10" stroke="#9aa3ab" />
          </svg>
          <svg width="17" height="11" viewBox="0 0 17 11" fill="none" stroke="#1b1b1b" strokeWidth="1.200">
            <rect x="1" y="1" width="13" height="9" rx="2" />
            <path d="M3 3h2.500v5H3z" fill="#1b1b1b" stroke="none" />
            <path d="M15.500 4v3" strokeWidth="2" />
          </svg>
        </IconButton>
        <button type="button" className="mr-[6px] text-right">
          <span className="block">1:13 AM</span>
          <span className="block">9/6/2023</span>
        </button>
        <button type="button" aria-label="15 notifications" className="flex size-[18px] items-center justify-center rounded-full bg-[#0078d4] text-[11px] text-white">
          15
        </button>
      </div>
    </footer>
  );
}

export default function App() {
  return (
    <div className={`flex h-screen flex-col overflow-hidden bg-[#191919] ${UI}`}>
      <TitleBar />
      <MenuBar />
      <Toolbar />
      <main className="flex min-h-0 flex-1 gap-[2px]">
        <div className="flex min-w-0 flex-1 flex-col gap-[2px]">
          <div className="flex min-h-0 flex-1 gap-[2px]">
            <Hierarchy />
            <GamePanel />
          </div>
          <ProjectPanel />
        </div>
        <Inspector />
      </main>
      <StatusBar />
      <Taskbar />
    </div>
  );
}
